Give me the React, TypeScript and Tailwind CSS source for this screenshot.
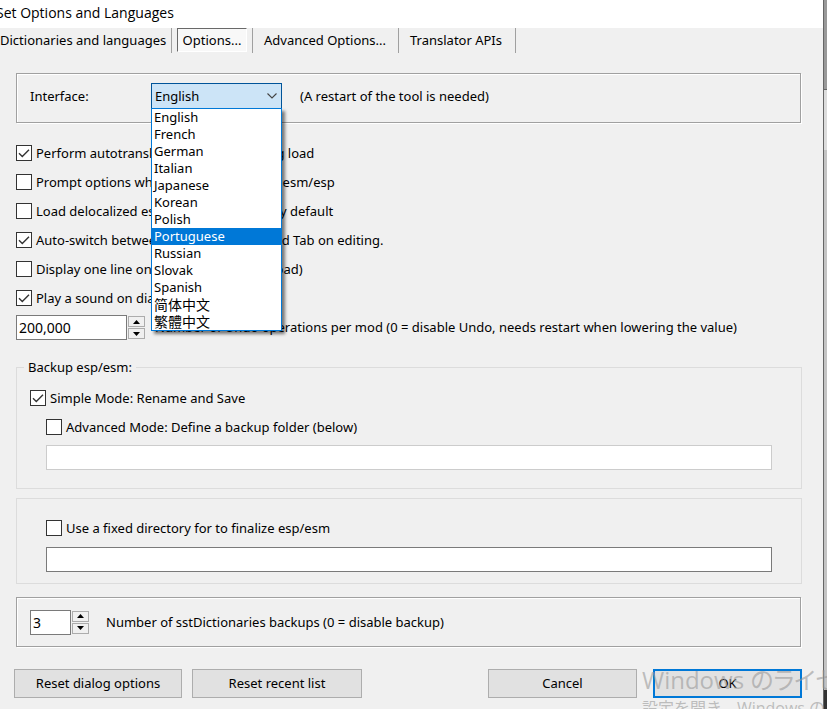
import { useState } from "react";
import type { ReactNode } from "react";
import clsx from "clsx";

const tabs = ["Dictionaries and languages", "Options...", "Advanced Options...", "Translator APIs"];

const languages = [
  "English",
  "French",
  "German",
  "Italian",
  "Japanese",
  "Korean",
  "Polish",
  "Portuguese",
  "Russian",
  "Slovak",
  "Spanish",
  "简体中文",
  "繁體中文",
];

const loadOptions = [
  { label: "Perform autotranslations before starting load", checked: true },
  { label: "Prompt options when opening a master esm/esp", checked: false },
  { label: "Load delocalized esp from strings files by default", checked: false },
  { label: "Auto-switch between Vocabulary tree and Tab on editing.", checked: true },
  { label: "Display one line only (allows a faster reload)", checked: false },
  { label: "Play a sound on dialog", checked: true },
];

function CheckBox({ label, defaultChecked = false }: { label: string; defaultChecked?: boolean }) {
  return (
    <label className="flex h-4 w-fit items-center gap-1 whitespace-nowrap">
      <span className="grid size-4 shrink-0">
        <input
          type="checkbox"
          defaultChecked={defaultChecked}
          className="peer col-start-1 row-start-1 size-4 appearance-none border border-[#333] bg-white"
        />
        <svg
          viewBox="0 0 16 16"
          className="pointer-events-none invisible col-start-1 row-start-1 size-4 peer-checked:visible"
          aria-hidden="true"
        >
          <path d="M3 8.2 6.3 11.5 13 4.8" fill="none" stroke="#333" strokeWidth="1.4" />
        </svg>
      </span>
      {label}
    </label>
  );
}

function StepButton({ up = false, onClick }: { up?: boolean; onClick: () => void }) {
  return (
    <button
      type="button"
      aria-label={up ? "Increase" : "Decrease"}
      onClick={onClick}
      className="flex h-[11px] w-[17px] items-center justify-center border border-[#acacac] bg-[#f0f0f0]"
    >
      <svg viewBox="0 0 7 4" className="h-1 w-[7px]" aria-hidden="true">
        <path d={up ? "M0 4 3.5 0 7 4z" : "M0 0 3.5 4 7 0z"} fill="#000" />
      </svg>
    </button>
  );
}

function Spinner({ id, initial, className }: { id: string; initial: number; className: string }) {
  const [value, setValue] = useState(initial);
  return (
    <div className="flex items-center gap-px">
      <input
        id={id}
        type="text"
        value={value.toLocaleString("en-US")}
        onChange={(e) => setValue(Number(e.target.value.replace(/\D/g, "")))}
        className={clsx("h-[25px] border border-[#7a7a7a] bg-white px-[2px] text-[14px] outline-none", className)}
      />
      <div className="flex flex-col gap-px">
        <StepButton up onClick={() => setValue(value + 1)} />
        <StepButton onClick={() => setValue(Math.max(0, value - 1))} />
      </div>
    </div>
  );
}

// Etched frame: grey line with a white highlight on its lower right side
function Panel({ children, className }: { children: ReactNode; className?: string }) {
  return (
    <section
      className={clsx(
        "mr-px flex h-[50px] items-center border border-[#a0a0a0] px-[13px] shadow-[1px_1px_0_#fff,inset_1px_1px_0_#fff]",
        className,
      )}
    >
      {children}
    </section>
  );
}

function DialogButton({ children, primary = false, className }: { children: ReactNode; primary?: boolean; className: string }) {
  return (
    <button
      type="button"
      className={clsx(
        "h-[29px] bg-[#e1e1e1] text-center",
        primary ? "border-2 border-[#0078d7]" : "border border-[#adadad]",
        className,
      )}
    >
      {children}
    </button>
  );
}

function LanguageSelect() {
  const [value, setValue] = useState("English");
  const [open, setOpen] = useState(true);
  const [active, setActive] = useState("Portuguese");

  return (
    <div className="relative w-[131px]">
      <div className="grid items-center">
        <select
          id="interface"
          value={value}
          onChange={(e) => setValue(e.target.value)}
          onMouseDown={(e) => {
            e.preventDefault();
            setOpen(!open);
          }}
          className="col-start-1 row-start-1 h-[26px] w-full appearance-none border border-[#005499] bg-[#cce4f7] px-[3px] outline-none"
        >
          {languages.map((lang) => (
            <option key={lang}>{lang}</option>
          ))}
        </select>
        <svg
          viewBox="0 0 10 6"
          className="pointer-events-none col-start-1 row-start-1 mr-[5px] h-[6px] w-[10px] justify-self-end"
          aria-hidden="true"
        >
          <path d="M.5 .5 5 5 9.5 .5" fill="none" stroke="#444" strokeWidth="1.1" />
        </svg>
      </div>
      {open && (
        <ul
          role="listbox"
          aria-label="Interface language"
          className="absolute inset-x-0 top-[25px] z-10 border border-[#0078d7] bg-white shadow-[3px_3px_3px_rgba(0,0,0,0.5)]"
        >
          {languages.map((lang) => (
            <li
              key={lang}
              role="option"
              aria-selected={lang === active}
              onMouseEnter={() => setActive(lang)}
              onClick={() => {
                setValue(lang);
                setOpen(false);
              }}
              className={clsx(
                "h-[17px] px-[2px] leading-[17px]",
                lang.endsWith("中文") && "text-[14px]",
                lang === active && "bg-[#0078d7] text-white",
              )}
            >
              {lang}
            </li>
          ))}
        </ul>
      )}
    </div>
  );
}

export default function App() {
  const [tab, setTab] = useState("Options...");

  return (
    <div className="relative flex min-h-screen overflow-hidden bg-[#f0f0f0] font-['Noto_Sans','Noto_Sans_CJK_SC',sans-serif] text-[13px] leading-[17px] text-black">
      <div className="flex min-w-0 flex-1 flex-col">
        <header className="flex h-7 items-center bg-white pb-1">
          <h1 className="-ml-1 font-['Open_Sans',sans-serif] text-[14px]">Set Options and Languages</h1>
        </header>

        <nav className="flex h-[25px] whitespace-nowrap" aria-label="Settings pages">
          {tabs.map((name, i) => (
            <div
              key={name}
              className={clsx(
                "flex border-r border-[#a0a0a0]",
                i === 0 && "w-[172px]",
                i === 1 && "w-[81px] pr-[5px] pl-[5px]",
                i === 2 && "w-[146px] pl-[11px]",
                i === 3 && "w-[117px] pl-[11px]",
              )}
            >
              <button
                type="button"
                onClick={() => setTab(name)}
                className={clsx(
                  tab === name &&
                    "h-6 w-full border border-t-[#696969] border-r-white border-b-white border-l-[#696969] bg-[#f8f8f8]",
                )}
              >
                {name}
              </button>
            </div>
          ))}
        </nav>

        <main className="flex flex-col px-4 pt-5 pr-[21px]">
          <Panel className="pb-1">
            <label htmlFor="interface" className="w-[121px]">
              Interface:
            </label>
            <LanguageSelect />
            <span className="ml-[18px]">(A restart of the tool is needed)</span>
          </Panel>

          <div className="mt-[22px] flex flex-col gap-[13px]">
            {loadOptions.map((option) => (
              <CheckBox key={option.label} label={option.label} defaultChecked={option.checked} />
            ))}
          </div>

          <div className="mt-[9px] flex items-center gap-[10px]">
            <Spinner id="undo" initial={200000} className="w-[111px]" />
            <label htmlFor="undo">
              Number of Undo operations per mod (0 = disable Undo, needs restart when lowering the value)
            </label>
          </div>

          <fieldset className="mt-[19px] border border-[#dcdcdc] px-[13px] pb-[18px]">
            <legend className="-ml-[6px] px-1">Backup esp/esm:</legend>
            <div className="mt-[14px]">
              <CheckBox label="Simple Mode: Rename and Save" defaultChecked />
            </div>
            <div className="mt-[13px] mr-4 ml-4">
              <CheckBox label="Advanced Mode: Define a backup folder (below)" />
              <input
                type="text"
                aria-label="Backup folder"
                className="mt-[10px] block h-[25px] w-full border border-[#ccc] bg-white px-1 outline-none"
              />
            </div>
          </fieldset>

          <section className="mt-[9px] border border-[#dcdcdc] px-[29px] pt-[21px] pb-[11px]">
            <CheckBox label="Use a fixed directory for to finalize esp/esm" />
            <input
              type="text"
              aria-label="Fixed directory"
              className="mt-[11px] block h-[25px] w-full border border-[#7a7a7a] bg-white px-1 outline-none"
            />
          </section>

          <div className="mt-[13px]">
            <Panel>
              <Spinner id="backups" initial={3} className="w-[41px]" />
              <label htmlFor="backups" className="ml-[17px]">
                Number of sstDictionaries backups (0 = disable backup)
              </label>
            </Panel>
          </div>
        </main>

        <footer className="mt-[22px] mb-[10px] flex gap-[10px] pr-[21px] pl-[14px]">
          <DialogButton className="w-[168px]">Reset dialog options</DialogButton>
          <DialogButton className="w-[170px]">Reset recent list</DialogButton>
          <DialogButton className="ml-auto w-[149px]">Cancel</DialogButton>
          <DialogButton primary className="ml-[6px] w-[149px]">
            OK
          </DialogButton>
        </footer>
      </div>

      {/* Sliver of the window behind the dialog */}
      <div className="flex w-1 flex-col border-l border-[#666] bg-[#c4c4c4]" aria-hidden="true">
        <div className="h-[89px] bg-[#999]" />
        <div className="h-px bg-[#666]" />
        <div className="h-[60px] bg-[#dcdcdc]" />
        <div className="mt-auto h-[19px] bg-[#333]" />
      </div>

      {/* Activation watermark drawn by the desktop on top of every window */}
      <div
        className="pointer-events-none absolute right-0 bottom-[-11px] z-20 w-[185px] overflow-hidden font-['Open_Sans','Noto_Sans_CJK_JP',sans-serif] whitespace-nowrap text-[#999]/60"
        aria-hidden="true"
      >
        <p className="text-[24px] leading-[32px] [font-feature-settings:'palt']">Windows のライセンス認証</p>
        <p className="text-[16px] leading-[24px]">設定を開き、Windows のライセンス認証を行ってください。</p>
      </div>
    </div>
  );
}
